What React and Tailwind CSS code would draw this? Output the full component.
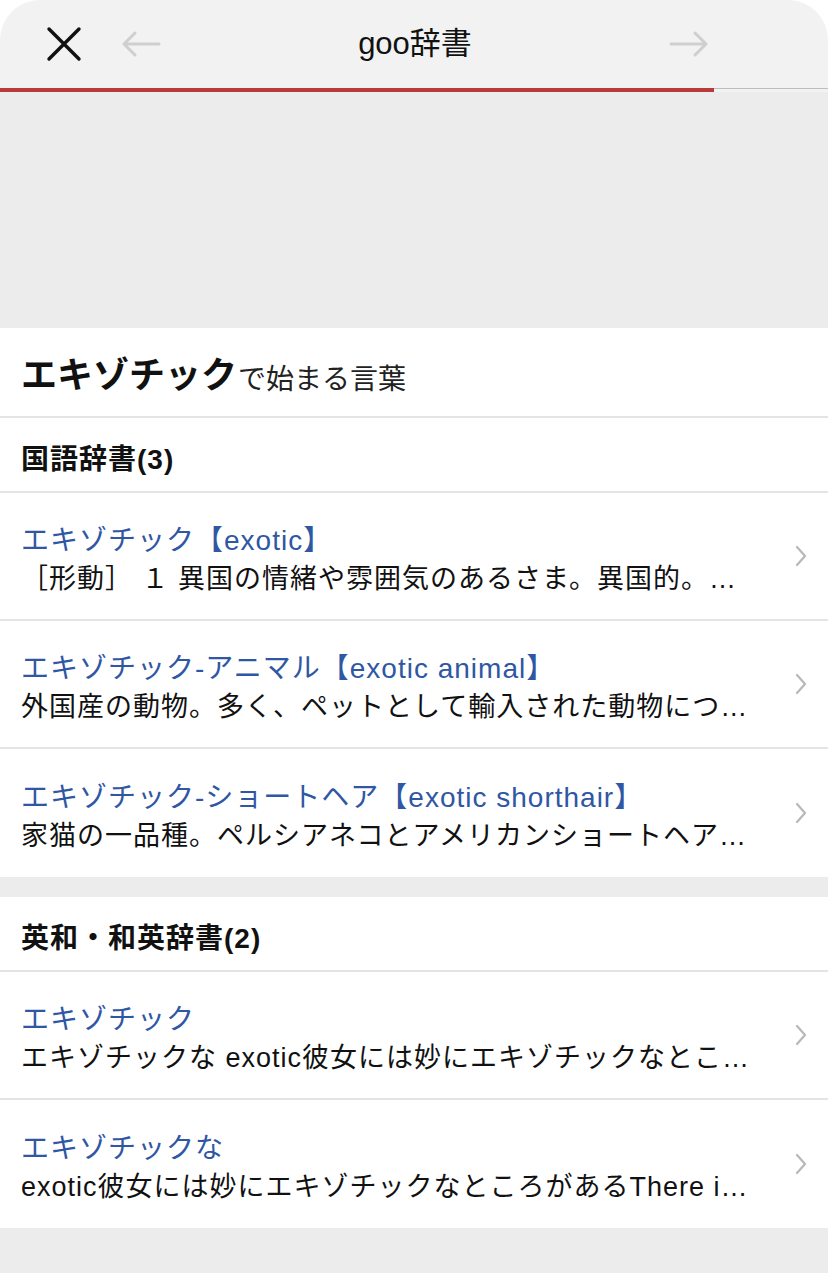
const FONT = { fontFamily: '"Liberation Sans", "Noto Sans CJK JP", sans-serif' };

const sections = [
  {
    title: '国語辞書(3)',
    items: [
      { head: 'エキゾチック【exotic】', body: '［形動］ １ 異国の情緒や雰囲気のあるさま。異国的。…' },
      { head: 'エキゾチック-アニマル【exotic animal】', body: '外国産の動物。多く、ペットとして輸入された動物につ…' },
      { head: 'エキゾチック-ショートヘア【exotic shorthair】', body: '家猫の一品種。ペルシアネコとアメリカンショートヘア…' },
    ],
  },
  {
    title: '英和・和英辞書(2)',
    items: [
      { head: 'エキゾチック', body: 'エキゾチックな exotic彼女には妙にエキゾチックなとこ…' },
      { head: 'エキゾチックな', body: 'exotic彼女には妙にエキゾチックなところがあるThere i…' },
    ],
  },
];

function Chevron() {
  return (
    <svg width="14" height="24" viewBox="0 0 14 24" fill="none" stroke="#b8b8b8" strokeWidth="2.2" strokeLinecap="round" strokeLinejoin="round">
      <path d="M3 3l8 9-8 9" />
    </svg>
  );
}

function Item({ head, body, last }) {
  return (
    <div className={`flex items-center h-[128px] pl-[21px] pr-[20px] ${last ? '' : 'border-b-2 border-[#e4e4e4]'}`}>
      <div className="flex-1 min-w-0 pr-[20px] pt-[8px]">
        <div className="text-[28px] leading-[38px] tracking-[1px] text-[#2f57a3] whitespace-nowrap">{head}</div>
        <div className="text-[27px] leading-[38px] tracking-[1px] text-[#111] whitespace-nowrap overflow-hidden">{body}</div>
      </div>
      <Chevron />
    </div>
  );
}

function Section({ title, items }) {
  return (
    <div className="bg-white">
      <div className="h-[75px] flex items-center px-[21px] pt-[10px] border-b-2 border-[#e4e4e4]">
        <span className="text-[28px] font-bold tracking-[1px] text-[#111]">{title}</span>
      </div>
      {items.map((it, i) => (
        <Item key={i} {...it} last={i === items.length - 1} />
      ))}
    </div>
  );
}

export default function App() {
  return (
    <div className="w-[828px] h-[1273px] bg-[#ececec] overflow-hidden" style={FONT}>
      {/* Top bar */}
      <div className="bg-white">
        <div className="relative h-[88px] bg-[#f2f2f2] rounded-t-[40px] flex items-center">
          <div className="flex items-center pl-[46px] gap-[38px]">
            <svg width="36" height="36" viewBox="0 0 36 36" stroke="#111" strokeWidth="3.4" strokeLinecap="round">
              <path d="M3 3l30 30M33 3L3 33" />
            </svg>
            <svg width="42" height="28" viewBox="0 0 42 28" fill="none" stroke="#cfcfcf" strokeWidth="3" strokeLinecap="round" strokeLinejoin="round">
              <path d="M39 14H4M15 3L4 14l11 11" />
            </svg>
          </div>
          <div className="flex-1 text-center text-[31px] text-[#111]">goo辞書</div>
          <div className="pr-[118px]">
            <svg width="42" height="28" viewBox="0 0 42 28" fill="none" stroke="#cfcfcf" strokeWidth="3" strokeLinecap="round" strokeLinejoin="round">
              <path d="M3 14h35M27 3l11 11-11 11" />
            </svg>
          </div>
        </div>
      </div>
      <div className="flex h-[4px] bg-[#f2f2f2]">
        <div className="w-[714px] h-[4px] bg-[#b83a3a]" />
        <div className="flex-1 h-px bg-[#bdbdbd]" />
      </div>

      {/* ad space */}
      <div className="h-[236px] bg-[#ececec]" />

      {/* Title */}
      <div className="bg-white h-[90px] flex items-end pb-[22px] px-[21px] border-b-2 border-[#e4e4e4]">
        <span className="text-[36px] font-bold text-[#111] leading-none">エキゾチック</span>
        <span className="text-[28px] text-[#222] leading-none ml-[1px]">で始まる言葉</span>
      </div>

      <Section {...sections[0]} />
      <div className="h-[20px]" />
      <Section {...sections[1]} />
    </div>
  );
}
